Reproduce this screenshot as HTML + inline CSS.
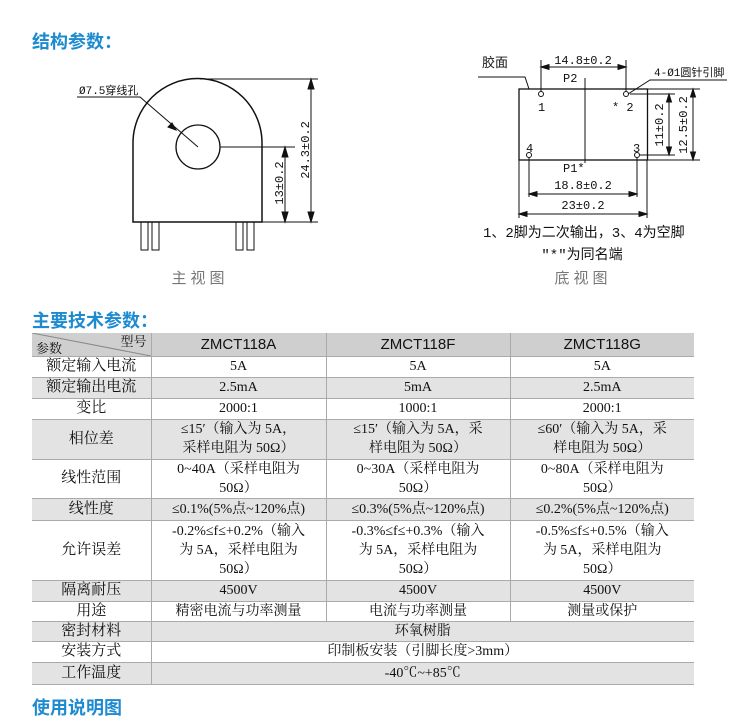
<!DOCTYPE html>
<html><head><meta charset="utf-8"><style>
body{margin:0;width:747px;height:703px;background:#fff;position:relative;overflow:hidden;font-family:"Liberation Serif","Noto Serif CJK SC",serif;}
.t{position:absolute;color:#1e8bd0;font-family:"Liberation Sans","Noto Sans CJK SC",sans-serif;font-weight:bold;font-size:18px;}
table{position:absolute;left:32px;top:333px;border-collapse:collapse;font-size:14px;color:#111;}
td{border-bottom:1.5px solid #aaa;border-right:1px solid #aaa;text-align:center;padding:0;line-height:19px;}
td:first-child{font-size:15px}
td:last-child{border-right:none}
tr.g td{background:#e3e3e3}
tr.h td{background:#cfcfcf;font-family:"Liberation Sans",sans-serif;font-size:15px;}
svg{position:absolute;left:0;top:0}
svg text{font-family:"Liberation Mono","Noto Sans CJK SC",monospace;}
</style></head><body>
<div class="t" style="left:32px;top:28px">结构参数：</div>
<div class="t" style="left:32px;top:307px">主要技术参数：</div>
<div class="t" style="left:32px;top:694px">使用说明图</div>
<svg width="747" height="703" stroke="#111" fill="none" stroke-width="1">
<path d="M133 222 V143 A64.5 64.5 0 0 1 262 143 V222 Z" stroke-width="1.5"/>
<circle cx="198" cy="147" r="22" stroke-width="1.3"/>
<rect x="141" y="222" width="7" height="28"/><rect x="152" y="222" width="7" height="28"/>
<rect x="236" y="222" width="7" height="28"/><rect x="247" y="222" width="7" height="28"/>
<path d="M200 79 H318 M262 222 H318 M311 81 V220 M220 147 H295 M285 149 V220"/>
<path d="M311 79 l-3 10 h6z M311 222 l-3 -10 h6z M285 147 l-3 10 h6z M285 222 l-3 -10 h6z" fill="#111"/>
<path d="M77 97 H140 L198 147"/>
<path d="M176 130 l-8 -3 l4 -4z" fill="#111"/>
<text x="79" y="94" font-size="11" fill="#111" stroke="none">Ø7.5穿线孔</text>
<text transform="translate(309,150) rotate(-90)" text-anchor="middle" font-size="12" fill="#111" stroke="none">24.3±0.2</text>
<text transform="translate(283,183) rotate(-90)" text-anchor="middle" font-size="12" fill="#111" stroke="none">13±0.2</text>
<text x="200" y="283" text-anchor="middle" font-size="15" fill="#777" stroke="none" letter-spacing="4" font-family="Liberation Sans,Noto Sans CJK SC,sans-serif">主视图</text>
<rect x="519" y="89" width="128.5" height="71" stroke-width="1.3"/>
<circle cx="541" cy="94" r="2.5"/><circle cx="626" cy="94" r="2.5"/>
<circle cx="529" cy="155" r="2.5"/><circle cx="637" cy="155" r="2.5"/>
<path d="M585 78 V163 M541 60 V91 M626 60 V91 M541 67 H626 M529 158 V197 M637 158 V197 M529 194 H637 M519 160 V218 M647 160 V218 M519 214 H647"/>
<path d="M647 89 H700 M630 94 H675 M640 155 H675 M647 160 H700 M669 94 V155 M693 89 V160"/>
<path d="M541 67 l8 -2.5 v5z M626 67 l-8 -2.5 v5z M529 194 l8 -2.5 v5z M637 194 l-8 -2.5 v5z M519 214 l8 -2.5 v5z M647 214 l-8 -2.5 v5z M669 94 l-2.5 8 h5z M669 155 l-2.5 -8 h5z M693 89 l-2.5 8 h5z M693 160 l-2.5 -8 h5z" fill="#111"/>
<path d="M478 77 H525 L529 89 M727 80 H650 L628 94"/>
<g fill="#111" stroke="none" font-size="12">
<text x="583" y="64" text-anchor="middle">14.8±0.2</text>
<text x="563" y="82">P2</text>
<text x="538" y="111" font-family="Liberation Serif,serif">1</text>
<text x="612" y="111" font-family="Liberation Serif,serif">* 2</text>
<text x="526" y="152" font-family="Liberation Serif,serif">4</text>
<text x="633" y="152" font-family="Liberation Serif,serif">3</text>
<text x="563" y="172">P1*</text>
<text x="583" y="189" text-anchor="middle">18.8±0.2</text>
<text x="583" y="209" text-anchor="middle">23±0.2</text>
<text transform="translate(663,125) rotate(-90)" text-anchor="middle">11±0.2</text>
<text transform="translate(687,125) rotate(-90)" text-anchor="middle">12.5±0.2</text>
<text x="654" y="76" font-size="11">4-Ø1圆针引脚</text>
<text x="482" y="67" font-size="13" font-family="Liberation Serif,Noto Serif CJK SC,serif">胶面</text>
<text x="483" y="237" font-size="14" font-family="Liberation Serif,Noto Serif CJK SC,serif">1、2脚为二次输出，3、4为空脚</text>
<text x="582" y="259" text-anchor="middle" font-size="14" font-family="Liberation Serif,Noto Serif CJK SC,serif">"*"为同名端</text>
<text x="583" y="283" text-anchor="middle" font-size="15" fill="#777" letter-spacing="4" font-family="Liberation Sans,Noto Sans CJK SC,sans-serif">底视图</text>
</g>
</svg>
<table>
<colgroup><col style="width:119px"><col style="width:175px"><col style="width:184px"><col style="width:184px"></colgroup>
<tr class="h" style="height:23px"><td style="position:relative;font-family:'Noto Serif CJK SC',serif;font-size:13px"><svg width="119" height="23" style="position:absolute;left:0;top:0"><path d="M0 0 L119 23" stroke="#888"/></svg><span style="position:absolute;left:4px;top:5px">参数</span><span style="position:absolute;right:4px;top:-2px">型号</span></td><td>ZMCT118A</td><td>ZMCT118F</td><td>ZMCT118G</td></tr>
<tr style="height:21px"><td>额定输入电流</td><td>5A</td><td>5A</td><td>5A</td></tr>
<tr class="g" style="height:21px"><td>额定输出电流</td><td>2.5mA</td><td>5mA</td><td>2.5mA</td></tr>
<tr style="height:21px"><td>变比</td><td>2000:1</td><td>1000:1</td><td>2000:1</td></tr>
<tr class="g" style="height:40px"><td>相位差</td><td>≤15′（输入为 5A，<br>采样电阻为 50Ω）</td><td>≤15′（输入为 5A，采<br>样电阻为 50Ω）</td><td>≤60′（输入为 5A，采<br>样电阻为 50Ω）</td></tr>
<tr style="height:39px"><td>线性范围</td><td>0~40A（采样电阻为<br>50Ω）</td><td>0~30A（采样电阻为<br>50Ω）</td><td>0~80A（采样电阻为<br>50Ω）</td></tr>
<tr class="g" style="height:22px"><td>线性度</td><td>≤0.1%(5%点~120%点)</td><td>≤0.3%(5%点~120%点)</td><td>≤0.2%(5%点~120%点)</td></tr>
<tr style="height:60px"><td>允许误差</td><td>-0.2%≤f≤+0.2%（输入<br>为 5A，采样电阻为<br>50Ω）</td><td>-0.3%≤f≤+0.3%（输入<br>为 5A，采样电阻为<br>50Ω）</td><td>-0.5%≤f≤+0.5%（输入<br>为 5A，采样电阻为<br>50Ω）</td></tr>
<tr class="g" style="height:21px"><td>隔离耐压</td><td>4500V</td><td>4500V</td><td>4500V</td></tr>
<tr style="height:20px"><td>用途</td><td>精密电流与功率测量</td><td>电流与功率测量</td><td>测量或保护</td></tr>
<tr class="g" style="height:20px"><td>密封材料</td><td colspan="3">环氧树脂</td></tr>
<tr style="height:21px"><td>安装方式</td><td colspan="3">印制板安装（引脚长度&gt;3mm）</td></tr>
<tr class="g" style="height:22px"><td>工作温度</td><td colspan="3">-40℃~+85℃</td></tr>
</table>
</body></html>
